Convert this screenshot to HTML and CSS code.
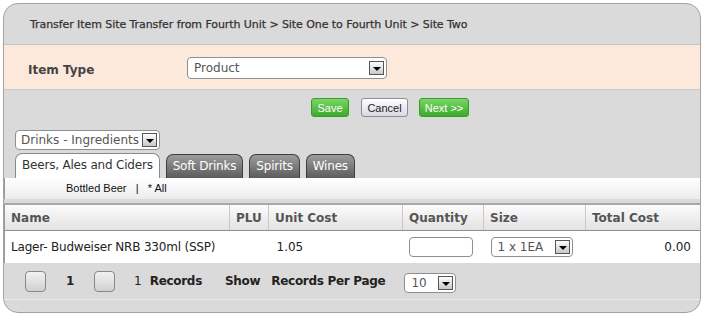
FILE: index.html
```html
<!DOCTYPE html>
<html lang="en">
<head>
    <meta charset="UTF-8">
    <title>Transfer Item</title>
    <link rel="stylesheet" href="styles.css">
</head>
<body>
    <div class="panel">
        <div class="crumb">Transfer Item Site Transfer from Fourth Unit &gt; Site One to Fourth Unit &gt; Site Two</div>

        <div class="type-row">
            <span class="type-label">Item Type</span>
            <div class="select type-select"><span>Product</span><i class="arrow"></i></div>
        </div>

        <div class="toolbar">
            <button class="btn green save">Save</button>
            <button class="btn plain cancel">Cancel</button>
            <button class="btn green next">Next &gt;&gt;</button>
        </div>

        <div class="cat-wrap">
            <div class="select cat-select"><span>Drinks - Ingredients</span><i class="arrow"></i></div>
        </div>

        <div class="tabs">
            <div class="tab active">Beers, Ales and Ciders</div>
            <div class="tab">Soft Drinks</div>
            <div class="tab">Spirits</div>
            <div class="tab">Wines</div>
        </div>

        <div class="subbar">Bottled Beer &nbsp; | &nbsp; * All</div>

        <table class="grid">
            <thead>
                <tr>
                    <th class="c-name">Name</th>
                    <th class="c-plu">PLU</th>
                    <th class="c-unit">Unit Cost</th>
                    <th class="c-qty">Quantity</th>
                    <th class="c-size">Size</th>
                    <th class="c-total">Total Cost</th>
                </tr>
            </thead>
            <tbody>
                <tr>
                    <td class="name">Lager- Budweiser NRB 330ml (SSP)</td>
                    <td></td>
                    <td class="unit">1.05</td>
                    <td><div class="qty"></div></td>
                    <td><div class="select size-select"><span>1 x 1EA</span><i class="arrow"></i></div></td>
                    <td class="total">0.00</td>
                </tr>
            </tbody>
        </table>

        <div class="pager">
            <span class="box"></span>
            <b class="num">1</b>
            <span class="box"></span>
            <span class="count">1</span>
            <b class="rec">Records</b>
            <b class="show">Show</b>
            <b class="rpp">Records Per Page</b>
            <div class="select page-select"><span>10</span><i class="arrow"></i></div>
        </div>
    </div>
</body>
</html>
```

FILE: styles.css
```css
body {
    margin: 0;
    background: #fff;
    font-family: "DejaVu Sans", Verdana, sans-serif;
    font-size: 11px;
    color: #222;
}
.panel {
    margin: 3px;
    width: 696px;
    height: 308px;
    border: 1px solid #a2a2a2;
    border-radius: 15px;
    background: #dadada;
    overflow: hidden;
}
.crumb {
    height: 40px;
    line-height: 41px;
    padding-left: 26px;
    font-size: 11px;
    letter-spacing: -0.07px;
    -webkit-text-stroke: 0.25px #333;
    color: #333;
    border-bottom: 1px solid #c6c6c6;
}
.type-row {
    display: flex;
    align-items: center;
    height: 44px;
    background: #fde9dc;
    border-bottom: 1px solid #c9c9c9;
}
.type-label {
    width: 159px;
    padding-left: 24px;
    padding-top: 5px;
    font-size: 12px;
    font-weight: bold;
    color: #444;
}
.select {
    display: flex;
    align-items: center;
    justify-content: space-between;
    box-sizing: border-box;
    height: 20px;
    background: #fff;
    border: 1px solid #8f8f8f;
    border-radius: 4px;
    padding: 0 2px 0 6px;
    color: #555;
    font-size: 12px;
}
.arrow {
    position: relative;
    width: 15px;
    height: 14px;
    box-sizing: border-box;
    border: 1px solid #555;
    background: linear-gradient(#fdfdfd, #c8c8c8);
}
.arrow::after {
    content: "";
    position: absolute;
    left: 3px;
    top: 5px;
    border-left: 4px solid transparent;
    border-right: 4px solid transparent;
    border-top: 4px solid #000;
}
.type-select {
    width: 200px;
    height: 22px;
    margin-top: 1px;
}
.toolbar {
    display: flex;
    gap: 12px;
    padding: 8px 0 0 307px;
}
.btn {
    height: 19px;
    padding: 0;
    border-radius: 3px;
    font-family: "Liberation Sans", Arial, sans-serif;
    font-size: 11px;
}
.btn.save { width: 38px; }
.btn.cancel { width: 47px; margin-right: -1px; }
.btn.next { width: 50px; }
.btn.green {
    border: 1px solid #3c9a2c;
    background: linear-gradient(#79d665, #3daa2a);
    color: #fff;
}
.btn.plain {
    border: 1px solid #8c8c9a;
    background: linear-gradient(#ffffff, #d8d8e4);
    color: #222;
}
.cat-wrap {
    padding: 13px 0 0 11px;
}
.cat-select {
    width: 145px;
    padding-left: 5px;
}
.tabs {
    display: flex;
    gap: 6px;
    height: 25px;
    margin-top: 3px;
    padding-left: 11px;
    align-items: flex-end;
}
.tab {
    box-sizing: border-box;
    height: 24px;
    padding: 0 6px;
    line-height: 22px;
    font-size: 12px;
    letter-spacing: -0.2px;
    color: #fff;
    border: 1px solid #3e3e3e;
    border-bottom: none;
    border-radius: 7px 7px 0 0;
    background: linear-gradient(#9c9c9c, #5c5c5c);
}
.tab.active {
    height: 25px;
    color: #333;
    border-color: #8a8a8a;
    background: #fff;
}
.subbar {
    height: 21px;
    line-height: 21px;
    padding-left: 61px;
    font-family: "Liberation Sans", Arial, sans-serif;
    font-size: 11px;
    color: #111;
    background: linear-gradient(#ffffff, #ececec);
    border-left: 1px solid #9a9a9a;
}
.grid {
    width: 100%;
    margin-top: 4px;
    border-collapse: collapse;
    border-top: 2px solid #a8a8a8;
    border-left: 1px solid #9a9a9a;
}
.grid th {
    height: 25px;
    padding: 0 6px;
    text-align: left;
    font-size: 12px;
    color: #555;
    background: linear-gradient(#fbfbfb, #e2e2e2);
    border-left: 1px solid #c8c8c8;
    border-bottom: 1px solid #8f8f8f;
}
.grid th.c-name { border-left: none; width: 212px; }
.grid th.c-plu { width: 26px; }
.grid th.c-unit { width: 121px; }
.grid th.c-qty { width: 68px; }
.grid th.c-size { width: 89px; }
.grid td {
    height: 32px;
    padding: 0 6px;
    background: #fff;
    font-size: 12px;
    color: #222;
}
.grid td.name { letter-spacing: -0.2px; }
.grid td.unit { padding-left: 8px; }
.grid td.total { text-align: right; padding-right: 9px; }
.qty {
    width: 62px;
    height: 18px;
    border: 1px solid #8f8f8f;
    border-radius: 4px;
    background: #fff;
}
.size-select {
    width: 82px;
    margin-left: 1px;
}
.pager {
    display: flex;
    align-items: center;
    height: 36px;
    padding-left: 21px;
    font-size: 12px;
    color: #222;
    border-bottom: 1px solid #ececec;
}
.pager b { letter-spacing: -0.3px; }
.box {
    box-sizing: border-box;
    width: 21px;
    height: 21px;
    border: 1px solid #888;
    border-radius: 4px;
    background: linear-gradient(#f2f2f2, #d0d0d0);
}
.num { margin: 0 20px 0 20px; }
.count { margin: 0 8px 0 19px; }
.show { margin-left: 23px; }
.rpp { margin-left: 11px; }
.page-select {
    width: 52px;
    margin: 4px 0 0 19px;
}
```
